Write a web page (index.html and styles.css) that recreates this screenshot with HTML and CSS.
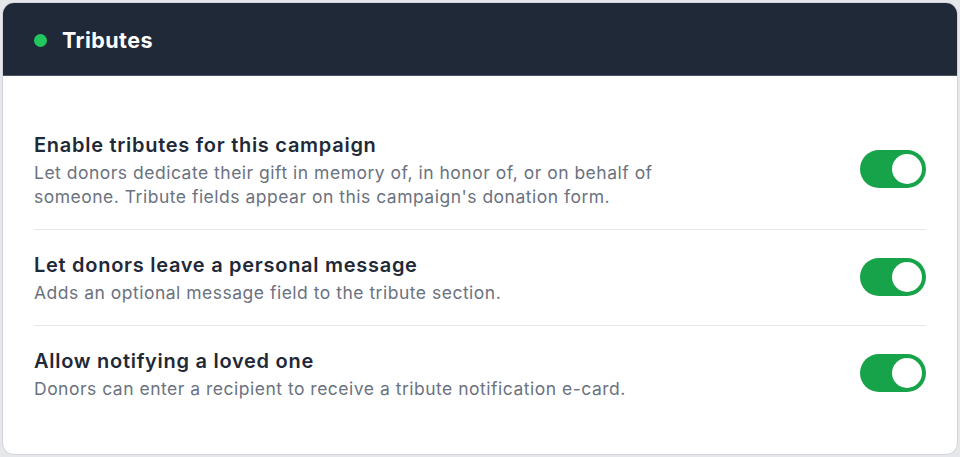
FILE: index.html
```html
<!DOCTYPE html>
<html lang="en">
<head>
<meta charset="utf-8">
<title>Tributes</title>
<link rel="stylesheet" href="styles.css">
</head>
<body>
<section class="card">
  <header class="card-header">
    <span class="status-dot"></span>
    <h2 class="card-title">Tributes</h2>
  </header>
  <div class="card-body">
    <div class="setting">
      <div class="setting-text">
        <h3 class="setting-title">Enable tributes for this campaign</h3>
        <p class="setting-desc">Let donors dedicate their gift in memory of, in honor of, or on behalf of someone. Tribute fields appear on this campaign's donation form.</p>
      </div>
      <span class="toggle is-on" role="switch" aria-checked="true"><span class="knob"></span></span>
    </div>
    <div class="setting">
      <div class="setting-text">
        <h3 class="setting-title">Let donors leave a personal message</h3>
        <p class="setting-desc">Adds an optional message field to the tribute section.</p>
      </div>
      <span class="toggle is-on" role="switch" aria-checked="true"><span class="knob"></span></span>
    </div>
    <div class="setting">
      <div class="setting-text">
        <h3 class="setting-title">Allow notifying a loved one</h3>
        <p class="setting-desc">Donors can enter a recipient to receive a tribute notification e-card.</p>
      </div>
      <span class="toggle is-on" role="switch" aria-checked="true"><span class="knob"></span></span>
    </div>
  </div>
</section>
</body>
</html>
```
FILE: styles.css
```css
* { box-sizing: border-box; }

html, body {
  margin: 0;
  height: 100%;
}

body {
  background: #e5e7eb;
  padding: 2px;
  font-family: Inter, "Noto Sans", Arial, sans-serif;
  -webkit-font-smoothing: antialiased;
}

.card {
  height: 453px;
  background: #ffffff;
  border: 1px solid #d1d5db;
  border-radius: 12px;
  overflow: hidden;
  display: flex;
  flex-direction: column;
}

.card-header {
  height: 73px;
  flex: none;
  background: #1f2937;
  border-bottom: 1px solid #4b5563;
  display: flex;
  align-items: center;
  gap: 15px;
  padding: 2px 31px 0;
}

.status-dot {
  width: 13px;
  height: 13px;
  border-radius: 50%;
  background: #22c55e;
  flex: none;
}

.card-title {
  margin: 0;
  color: #ffffff;
  font-size: 21.5px;
  line-height: 28px;
  font-weight: 700;
  letter-spacing: 0.45px;
}

.card-body {
  padding: 34px 31px;
}

.setting {
  display: flex;
  align-items: center;
  justify-content: space-between;
  gap: 24px;
  padding: 22px 0 20px;
}

.setting + .setting {
  border-top: 1px solid #e5e7eb;
}

.setting-text {
  display: flex;
  flex-direction: column;
  gap: 3px;
}

.setting-title {
  margin: 0;
  color: #1f2937;
  font-size: 20px;
  line-height: 26px;
  font-weight: 600;
  letter-spacing: 0.72px;
}

.setting-desc {
  margin: 0;
  max-width: 660px;
  color: #6b7280;
  font-size: 17.5px;
  line-height: 24px;
  letter-spacing: 0.5px;
}

.toggle {
  width: 66px;
  height: 38px;
  flex: none;
  border-radius: 19px;
  background: #d1d5db;
  display: flex;
  align-items: center;
  padding: 0 4px;
  margin-top: -4px;
}

.toggle.is-on {
  background: #16a34a;
  justify-content: flex-end;
}

.knob {
  width: 30px;
  height: 30px;
  border-radius: 50%;
  background: #ffffff;
}
```
